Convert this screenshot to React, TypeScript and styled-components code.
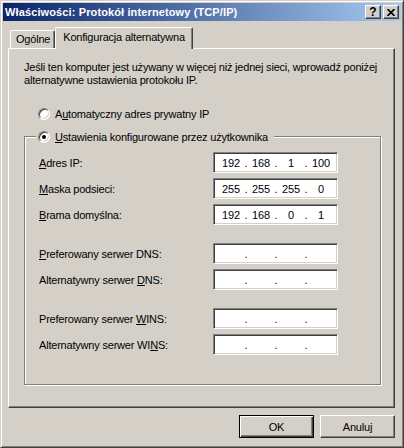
import React from "react";
import styled, {createGlobalStyle, css} from "styled-components";

const face = "#d4d0c8";
const shadow = "#808080";
const darkShadow = "#404040";
const hilite = "#ffffff";

const GlobalStyle = createGlobalStyle`
body { margin: 0; background: ${face}; }
* { box-sizing: border-box; }
`;

const raised = css`
border: 1px solid;
border-color: ${hilite} ${darkShadow} ${darkShadow} ${hilite};
box-shadow: inset -1px -1px ${shadow};
`;

const sunken = css`
border: 1px solid;
border-color: ${shadow} ${hilite} ${hilite} ${shadow};
box-shadow: inset 1px 1px ${darkShadow}, inset -1px -1px ${face};
`;

type IpValue = [string, string, string, string];
type Field = { label: React.ReactNode, value?: IpValue };

// label texts use <Key> for the underlined accelerator letter
const buildFields = (): Field[][] => [
    [
        {label: <><Key>A</Key>dres IP:</>, value: ["192", "168", "1", "100"]},
        {label: <><Key>M</Key>aska podsieci:</>, value: ["255", "255", "255", "0"]},
        {label: <><Key>B</Key>rama domyślna:</>, value: ["192", "168", "0", "1"]},
    ],
    [
        {label: <><Key>P</Key>referowany serwer DNS:</>},
        {label: <>Alternatywny serwer <Key>D</Key>NS:</>},
    ],
    [
        {label: <>Preferowany serwer <Key>W</Key>INS:</>},
        {label: <>Alternatywny serwer WI<Key>N</Key>S:</>},
    ],
];

const IpBox: React.FC<{ value?: IpValue }> = ({value}) => {
    const parts = value ?? ["", "", "", ""];
    return <IpFrame>
        {parts.map((p, i) => <React.Fragment key={i}>
            {i > 0 && <Dot>.</Dot>}
            <Segment>{p}</Segment>
        </React.Fragment>)}
    </IpFrame>;
};

const App: React.FC = () => <>
    <GlobalStyle/>
    <Window>
        <TitleBar>
            <TitleText>Właściwości: Protokół internetowy (TCP/IP)</TitleText>
            <CaptionButtons>
                <CaptionButton>?</CaptionButton>
                <CaptionButton>
                    <svg width="8" height="7" viewBox="0 0 8 7">
                        <path d="M0.5 0 L7.5 7 M7.5 0 L0.5 7" stroke="#000" strokeWidth="1.7"/>
                    </svg>
                </CaptionButton>
            </CaptionButtons>
        </TitleBar>
        <Body>
            <TabStrip>
                <Tab>Ogólne</Tab>
                <Tab $active>Konfiguracja alternatywna</Tab>
            </TabStrip>
            <Panel>
                <Intro>
                    Jeśli ten komputer jest używany w więcej niż jednej sieci, wprowadź poniżej<br/>
                    alternatywne ustawienia protokołu IP.
                </Intro>
                <RadioRow>
                    <Radio/>
                    <span>A<Key>u</Key>tomatyczny adres prywatny IP</span>
                </RadioRow>
                <Group>
                    <Legend>
                        <Radio $checked/>
                        <span><Key>U</Key>stawienia konfigurowane przez użytkownika</span>
                    </Legend>
                    <Fields>
                        {buildFields().map((section, i) => <Section key={i}>
                            {section.map((f, j) => <FieldRow key={j}>
                                <FieldLabel>{f.label}</FieldLabel>
                                <IpBox value={f.value}/>
                            </FieldRow>)}
                        </Section>)}
                    </Fields>
                </Group>
            </Panel>
            <ButtonRow>
                <PushButton $default>OK</PushButton>
                <PushButton>Anuluj</PushButton>
            </ButtonRow>
        </Body>
    </Window>
</>;

const Window = styled.div`
width: 404px;
height: 448px;
padding: 2px;
background: ${face};
border: 1px solid;
border-color: ${face} ${darkShadow} ${darkShadow} ${face};
box-shadow: inset 1px 1px ${hilite}, inset -1px -1px ${shadow};
font-family: "Liberation Sans", Arial, sans-serif;
font-size: 11px;
letter-spacing: -0.2px;
color: #000;
`;
const TitleBar = styled.div`
height: 18px;
display: flex;
align-items: center;
padding: 0 2px 0 2px;
background: linear-gradient(to right, #0a246a, #a6caf0);
`;
const TitleText = styled.div`
flex: 1;
color: #fff;
font-weight: bold;
letter-spacing: 0.12px;
white-space: nowrap;
`;
const CaptionButtons = styled.div`
display: flex;
gap: 2px;
`;
const CaptionButton = styled.div`
width: 16px;
height: 14px;
${raised};
background: ${face};
display: flex;
align-items: center;
justify-content: center;
font-weight: bold;
font-size: 12px;
letter-spacing: 0;
line-height: 1;
`;
const Body = styled.div`
padding: 0 6px 0 5px;
`;
const TabStrip = styled.div`
margin-top: 6px;
height: 21px;
display: flex;
align-items: flex-end;
padding-left: 2px;
position: relative;
z-index: 1;
`;
const Tab = styled.div<{ $active?: boolean }>`
height: ${p => p.$active ? 22 : 18}px;
margin-bottom: ${p => p.$active ? -1 : 0}px;
padding: ${p => p.$active ? "3px 7px 0 7px" : "2px 4px 0 5px"};
background: ${face};
border: 1px solid;
border-bottom: none;
border-color: ${hilite} ${darkShadow} transparent ${hilite};
border-radius: 2px 2px 0 0;
box-shadow: inset -1px 0 ${shadow};
white-space: nowrap;
line-height: 13px;
`;
const Panel = styled.div`
width: 387px;
height: 360px;
${raised};
padding: 12px 0 0 15px;
`;
const Intro = styled.p`
margin: 0;
line-height: 13px;
white-space: nowrap;
`;
const Key = styled.span`
text-decoration: underline;
`;
const RadioRow = styled.div`
display: flex;
align-items: center;
gap: 5px;
height: 13px;
margin: 20px 0 0 14px;
white-space: nowrap;
`;
const Radio = styled.span<{ $checked?: boolean }>`
width: 12px;
height: 12px;
flex: none;
border-radius: 50%;
background: #fff;
${sunken};
display: flex;
align-items: center;
justify-content: center;
&::after {
    content: "";
    width: 4px;
    height: 4px;
    border-radius: 50%;
    background: ${p => p.$checked ? "#000" : "transparent"};
}
`;
const Group = styled.div`
width: 357px;
height: 249px;
margin-top: 16px;
border: 1px solid ${shadow};
box-shadow: inset 1px 1px ${hilite}, 1px 1px ${hilite};
display: flex;
flex-direction: column;
`;
const Legend = styled.div`
align-self: flex-start;
display: flex;
align-items: center;
gap: 5px;
height: 13px;
margin: -7px 0 0 11px;
padding: 0 6px 0 2px;
background: ${face};
white-space: nowrap;
`;
const Fields = styled.div`
display: flex;
flex-direction: column;
gap: 18px;
margin-top: 9px;
padding-left: 14px;
`;
const Section = styled.div`
display: flex;
flex-direction: column;
gap: 5px;
`;
const FieldRow = styled.div`
display: flex;
align-items: center;
height: 21px;
`;
const FieldLabel = styled.div`
width: 174px;
white-space: nowrap;
`;
const IpFrame = styled.div`
width: 125px;
height: 21px;
${sunken};
background: #fff;
display: flex;
align-items: center;
padding-left: 4px;
`;
const Segment = styled.span`
width: 26px;
text-align: center;
`;
const Dot = styled.span`
width: 4px;
text-align: center;
`;
const ButtonRow = styled.div`
display: flex;
justify-content: flex-end;
gap: 6px;
margin-top: 7px;
`;
const PushButton = styled.button<{ $default?: boolean }>`
width: 75px;
height: 23px;
padding: 0;
background: ${face};
font: inherit;
letter-spacing: inherit;
color: #000;
${p => p.$default ? css`
border: 1px solid #000;
box-shadow: inset 1px 1px ${hilite}, inset -1px -1px ${darkShadow}, inset -2px -2px ${shadow};
` : raised};
`;

export default App;
